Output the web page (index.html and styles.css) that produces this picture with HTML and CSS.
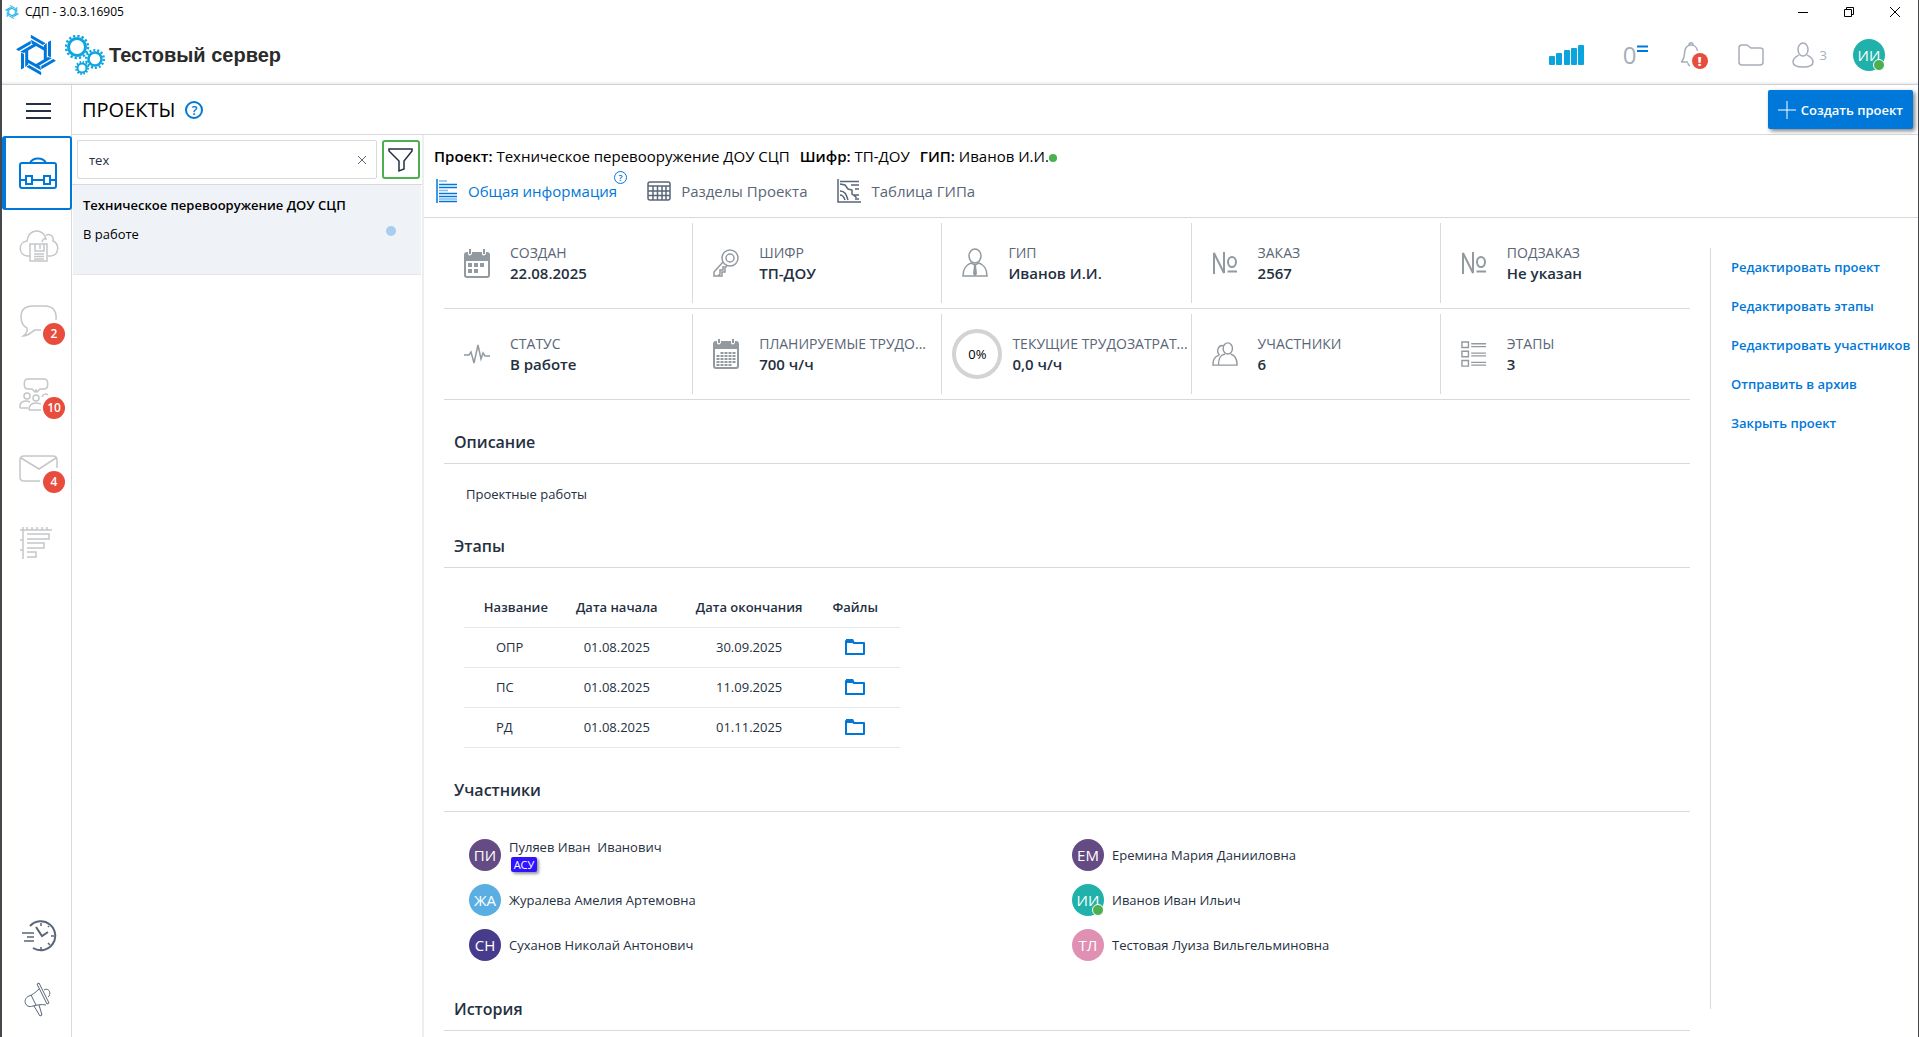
FILE: index.html
```html
<!DOCTYPE html>
<html lang="ru">
<head>
  <meta charset="UTF-8">
  <title>СДП - 3.0.3.16905</title>
  <meta name="viewport" content="width=device-width, initial-scale=1">
  <link rel="stylesheet" href="styles.css">
</head>
<body>
  <svg class="defs" aria-hidden="true">
    <symbol id="logo" viewBox="-20 -20 40 40">
      <g id="blade"><path d="M15-14.500V2.500L12 1V-13zM10.800-12V6.300L7.800 4.600V-9.500z"/></g>
      <use href="#blade" transform="rotate(60)"/>
      <use href="#blade" transform="rotate(120)"/>
      <use href="#blade" transform="rotate(180)"/>
      <use href="#blade" transform="rotate(240)"/>
      <use href="#blade" transform="rotate(300)"/>
    </symbol>
    <symbol id="folder" viewBox="0 0 20 16">
      <path d="M1 14V2h6l2 2h10v11H1z" fill="none" stroke="currentColor" stroke-width="2" stroke-linejoin="round"/>
      <path d="M1 0h7l2 4H1z"/>
    </symbol>
    <symbol id="numero" viewBox="0 0 26 26">
      <path d="M2 24V3L12 23V2" fill="none" stroke="currentColor" stroke-width="2"/>
      <ellipse cx="20" cy="12" rx="4" ry="5" fill="none" stroke="currentColor" stroke-width="2"/>
      <path d="M15.500 21.500h9.500" stroke="currentColor" stroke-width="2"/>
    </symbol>
  </svg>

  <div class="window">
    <div class="titlebar">
      <svg class="title-logo" width="14" height="14"><use href="#logo"/></svg>
      <span>СДП - 3.0.3.16905</span>
      <div class="win-btns">
        <button aria-label="Свернуть"><svg width="12" height="12"><path d="M1 6.500h10"/></svg></button>
        <button aria-label="Развернуть"><svg width="12" height="12"><path d="M1.500 3.500h7v7h-7zM3.500 3.500v-2h7v7h-2"/></svg></button>
        <button aria-label="Закрыть"><svg width="12" height="12"><path d="M1 1l10 10M11 1L1 11"/></svg></button>
      </div>
    </div>

    <header class="header">
      <svg class="logo" width="40" height="40"><use href="#logo"/></svg>
      <svg class="gears" width="40" height="40" viewBox="0 0 40 40" fill="none">
        <circle cx="12" cy="12" r="8.500" stroke-width="3"/>
        <circle cx="12" cy="12" r="11" stroke-width="2.500" stroke-dasharray="2.300 2.020"/>
        <circle cx="30" cy="24" r="6.500" stroke-width="2.500"/>
        <circle cx="30" cy="24" r="8.800" stroke-width="2.500" stroke-dasharray="2 1.950"/>
        <circle cx="17" cy="33" r="4.500" stroke-width="2"/>
        <circle cx="17" cy="33" r="6" stroke-width="2" stroke-dasharray="1.500 1.640"/>
      </svg>
      <span class="server-name">Тестовый сервер</span>
      <div class="header-icons">
        <svg class="signal" width="36" height="22" viewBox="0 0 36 22">
          <rect x="0" y="12" width="6" height="9" rx="1"/><rect x="7" y="9" width="6" height="12" rx="1"/><rect x="15" y="6" width="6" height="15" rx="1"/><rect x="22" y="4" width="6" height="17" rx="1"/><rect x="29" y="1" width="6" height="20" rx="1"/>
        </svg>
        <span class="counter">0<svg width="11" height="8"><path d="M0 1.500h11M0 6h11" stroke-width="2"/></svg></span>
        <button class="icon-btn bell" aria-label="Уведомления">
          <svg width="28" height="28" viewBox="0 0 28 28" class="line">
            <path d="M1 21c4-3 3-7 4-12 1-3 3-5 6-5s6 2 6.500 6M1 21h7M9 4c0-3 4-3 4 0M8 22c0 2 1 2 2 3"/>
          </svg>
          <span class="alert">!</span>
        </button>
        <button class="icon-btn files" aria-label="Файлы">
          <svg width="26" height="22" viewBox="0 0 26 22" class="line"><path d="M1 18V4c0-2 1-3 3-3h5l4 3h9c2 0 3 1 3 2v12c0 2-1 3-3 3H4c-2 0-3-1-3-3z"/></svg>
        </button>
        <button class="icon-btn users">
          <svg width="22" height="26" viewBox="0 0 22 26" class="line"><ellipse cx="11" cy="7.500" rx="5" ry="6.500"/><path d="M7 13c-3 2-6 3-6 7 0 3 4 5 10 5s10-2 10-5c0-4-3-5-6-7"/></svg>
          3
        </button>
        <button class="avatar teal online">ИИ</button>
      </div>
    </header>

    <div class="body">
      <nav class="sidebar">
        <button class="burger" aria-label="Меню"><i></i><i></i><i></i></button>
        <a href="#" class="nav-item active" aria-label="Проекты">
          <svg width="38" height="34" viewBox="0 0 38 34"><path d="M11 7C14 1 24 1 27 7M3 7h32q2 0 2 2v21q0 2-2 2H3q-2 0-2-2V9q0-2 2-2zM1 24h5M14 24h11M32 24h5M7 20h6v8H7zM25 20h6v8h-6z"/></svg>
        </a>
        <a href="#" class="nav-item" aria-label="Облако">
          <svg width="40" height="34" viewBox="0 0 40 34"><path d="M11 26H8c-9-1-9-14 0-15C9-2 25-2 27 9c-2-1-3 0-4 3M27 5c5-2 8 2 7 6 7 3 6 14-2 15h-3M11 14h17v17H11zM16 14v7h9v-7M21 15v4M15 24h10M15 26.500h10M15 29h10"/></svg>
        </a>
        <a href="#" class="nav-item" aria-label="Сообщения">
          <svg width="40" height="34" viewBox="0 0 40 34"><path d="M37 16C38 6 33 2 26 2H14C6 2 2 6 2 13c0 6 2 9 6 11 1 3-1 6-4 8 6 0 8-4 12-6h6"/></svg>
          <span class="badge">2</span>
        </a>
        <a href="#" class="nav-item" aria-label="Обсуждения">
          <svg width="40" height="34" viewBox="0 0 40 34"><path d="M9 1h16c5 0 5 10 0 10h-2l-2 0-3 3-1-2-1 2-3-3H9C4 11 4 1 9 1z"/><circle cx="8" cy="18" r="3"/><circle cx="17" cy="20" r="3"/><path d="M23 19c1-3 4-4 6-2M1 30v-3c1-4 6-5 10-3M1 30h8M10 32c0-5 2-7 7-7 2 0 4 1 5 1M10 32h12"/></svg>
          <span class="badge">10</span>
        </a>
        <a href="#" class="nav-item" aria-label="Почта">
          <svg width="40" height="34" viewBox="0 0 40 34"><path d="M38 16V8q0-4-4-4H5Q1 4 1 8v17q0 4 4 4h16M2 6l18 11L37 6"/></svg>
          <span class="badge">4</span>
        </a>
        <a href="#" class="nav-item" aria-label="График">
          <svg width="40" height="34" viewBox="0 0 40 34"><path d="M1 4h32M4 1v32M1 14h3M1 24h3M8 1v3M13 1v3M18 1v3M23 1v3M28 1v3M8 8h22v5H8M8 17h17v5H8M8 26h9v5H8"/></svg>
        </a>
        <div class="nav-bottom">
          <a href="#" class="nav-item dark" aria-label="История">
            <svg width="36" height="32" viewBox="0 0 36 32"><path d="M9 6a14.500 14.500 0 1 1 3 22" stroke-width="2"/><path d="M15 7l6 9 6-4" stroke-width="2"/><path d="M1 13h12M6 17h7M3 21h10M20 3v3M20 27v3M30 16h3M27 7l1-1M27 23l2 2"/></svg>
          </a>
          <a href="#" class="nav-item dark" aria-label="Объявления">
            <svg width="30" height="36" viewBox="0 0 30 36"><path d="M15 7C11 11 8 13 5 14c-7 3-4 13 4 10 4-1 8-2 13-1M7 13l5 10M13 2l10 20 2-1L15 1zM20 8c5-3 8 4 4 7M10 24l6 10 2-1-3-10" stroke-width="1"/></svg>
          </a>
        </div>
      </nav>

      <div class="page">
        <div class="page-head">
          <h1>ПРОЕКТЫ</h1>
          <button class="help" aria-label="Справка">?</button>
          <button class="create-btn">
            <svg width="18" height="18"><path d="M9 0v18M0 9h18"/></svg>
            Создать проект
          </button>
        </div>

        <div class="columns">
          <section class="list">
            <div class="search-row">
              <div class="search">
                <input type="text" value="тех" aria-label="Поиск">
                <button aria-label="Очистить"><svg width="10" height="10"><path d="M1 1l8 8M9 1L1 9"/></svg></button>
              </div>
              <button class="filter-btn" aria-label="Фильтр">
                <svg width="26" height="26" viewBox="0 0 26 26"><path d="M1 2h23v2l-8 10v8l-5 2V14L1 4z"/></svg>
              </button>
            </div>
            <a href="#" class="project">
              <b>Техническое перевооружение ДОУ СЦП</b>
              <span class="project-status">В работе <i></i></span>
            </a>
          </section>

          <main class="content">
            <div class="content-head">
              <div class="project-line">
                <span><b>Проект:</b> Техническое перевооружение ДОУ СЦП</span>
                <span><b>Шифр:</b> ТП-ДОУ</span>
                <span><b>ГИП:</b> Иванов И.И.<i class="dot"></i></span>
              </div>
              <div class="tabs">
                <a href="#" class="tab active">
                  <svg width="22" height="24" viewBox="0 0 22 24"><path d="M1 0v24M3 5.500h18M3 8.500h18M3 14.500h18M3 17.500h18M3 22.500h18"/><path d="M3 2h8M3 11.500h9M3 20h18" opacity=".5"/></svg>
                  <span class="tab-text">Общая информация<span class="help small">?</span></span>
                </a>
                <a href="#" class="tab">
                  <svg width="24" height="20" viewBox="0 0 24 20"><path d="M1 5V3q0-2 2-2h18q2 0 2 2v14q0 2-2 2H3q-2 0-2-2V5h22M1 10h22M1 14.500h22M6 5v14M10.500 5v14M15 5v14M19 5v14"/></svg>
                  <span class="tab-text">Разделы Проекта</span>
                </a>
                <a href="#" class="tab">
                  <svg width="24" height="24" viewBox="0 0 24 24"><path d="M1 0v23h23M3 2.500h19M14 6h8M18 10h4M17 16h5M20 20h2M3 5l5 1 3 4 4 1 0 4 4 3v3M3 12c5 0 6 3 8 9M3 16c3 0 4 2 5 5"/></svg>
                  <span class="tab-text">Таблица ГИПа</span>
                </a>
              </div>
            </div>

            <div class="content-body">
              <div class="details">
                <div class="cards">
                  <div class="card">
                    <svg width="26" height="30" viewBox="0 0 26 30"><path d="M1 12h24v15q0 2-2 2H3q-2 0-2-2V8" fill="none" stroke="currentColor" stroke-width="2"/><path d="M0 12V7q0-3 3-3h1v2q1 3 4 0V4h10v2q1 3 4 0V4h1q3 0 3 3v5zM5 1v5h2V1zM19 1v5h2V1zM4 15h4v4H4zM10 15h4v4h-4zM16 15h4v4h-4zM4 21h4v4H4zM10 21h4v4h-4z"/></svg>
                    <div><span>СОЗДАН</span><b>22.08.2025</b></div>
                  </div>
                  <div class="card">
                    <svg class="stroke" width="26" height="30" viewBox="0 0 26 30"><circle cx="17" cy="10" r="8"/><circle cx="17" cy="10" r="4"/><path d="M10 14L1 24v4h4l2-2v-4h3v-3h3l1-2M5 28h4v-4h3v-4"/></svg>
                    <div><span>ШИФР</span><b>ТП-ДОУ</b></div>
                  </div>
                  <div class="card">
                    <svg class="stroke" width="26" height="30" viewBox="0 0 26 30"><ellipse cx="13" cy="8" rx="6" ry="7"/><path d="M9 15c-5 2-8 5-8 13h24c0-8-3-11-8-13l-4 2z"/><path d="M12 17h2l1 9-2 2-2-2z" fill="currentColor" stroke="none"/></svg>
                    <div><span>ГИП</span><b>Иванов И.И.</b></div>
                  </div>
                  <div class="card">
                    <svg width="28" height="28"><use href="#numero"/></svg>
                    <div><span>ЗАКАЗ</span><b>2567</b></div>
                  </div>
                  <div class="card">
                    <svg width="28" height="28"><use href="#numero"/></svg>
                    <div><span>ПОДЗАКАЗ</span><b>Не указан</b></div>
                  </div>
                  <div class="card">
                    <svg class="stroke" width="26" height="24" viewBox="0 0 26 24"><path d="M0 13h5l2-3 3 11 4-18 3 14 2-6 2 3h5"/></svg>
                    <div><span>СТАТУС</span><b>В работе</b></div>
                  </div>
                  <div class="card">
                    <svg width="26" height="30" viewBox="0 0 26 30"><path d="M1 9h24v18q0 2-2 2H3q-2 0-2-2V8" fill="none" stroke="currentColor" stroke-width="2"/><path d="M0 9V5q0-3 3-3h1v2q1 3 4 0V2h10v2q1 3 4 0V2h1q3 0 3 3v4zM5 0v4h2V0zM19 0v4h2V0z"/><path d="M5 16v11M9 13v14M13 13v14M17 13v14M21 13v11" stroke="currentColor" stroke-width="3" stroke-dasharray="2 1"/></svg>
                    <div><span>ПЛАНИРУЕМЫЕ ТРУДО...</span><b>700 ч/ч</b></div>
                  </div>
                  <div class="card progress">
                    <div class="ring">0%</div>
                    <div><span>ТЕКУЩИЕ ТРУДОЗАТРАТ...</span><b>0,0 ч/ч</b></div>
                  </div>
                  <div class="card">
                    <svg class="stroke" width="28" height="26" viewBox="0 0 28 26"><ellipse cx="17" cy="7" rx="5" ry="6"/><path d="M14 13c-5 1-7 4-7 12h20c0-8-3-11-7-12M12 4c-5-1-8 6-4 10M8 14c-5 2-7 4-7 11h6"/></svg>
                    <div><span>УЧАСТНИКИ</span><b>6</b></div>
                  </div>
                  <div class="card">
                    <svg class="stroke" width="28" height="28" viewBox="0 0 28 28"><path d="M1 1h7v6H1zM1 11h7v6H1zM1 21h7v6H1zM11 3h16M11 6h16M11 13h16M11 16h16M11 23h16M11 26h16"/></svg>
                    <div><span>ЭТАПЫ</span><b>3</b></div>
                  </div>
                </div>

                <h2>Описание</h2>
                <p class="description">Проектные работы</p>

                <h2>Этапы</h2>
                <table class="stages">
                  <thead>
                    <tr><th>Название</th><th>Дата начала</th><th>Дата окончания</th><th>Файлы</th></tr>
                  </thead>
                  <tbody>
                    <tr><td>ОПР</td><td>01.08.2025</td><td>30.09.2025</td><td><a href="#" aria-label="Файлы ОПР"><svg width="20" height="16"><use href="#folder"/></svg></a></td></tr>
                    <tr><td>ПС</td><td>01.08.2025</td><td>11.09.2025</td><td><a href="#" aria-label="Файлы ПС"><svg width="20" height="16"><use href="#folder"/></svg></a></td></tr>
                    <tr><td>РД</td><td>01.08.2025</td><td>01.11.2025</td><td><a href="#" aria-label="Файлы РД"><svg width="20" height="16"><use href="#folder"/></svg></a></td></tr>
                  </tbody>
                </table>

                <h2>Участники</h2>
                <div class="people">
                  <div class="person"><span class="avatar violet">ПИ</span><div>Пуляев Иван&nbsp; Иванович<span class="tag">АСУ</span></div></div>
                  <div class="person"><span class="avatar violet">ЕМ</span>Еремина Мария Данииловна</div>
                  <div class="person"><span class="avatar sky">ЖА</span>Журалева Амелия Артемовна</div>
                  <div class="person"><span class="avatar teal online">ИИ</span>Иванов Иван Ильич</div>
                  <div class="person"><span class="avatar indigo">СН</span>Суханов Николай Антонович</div>
                  <div class="person"><span class="avatar pink">ТЛ</span>Тестовая Луиза Вильгельминовна</div>
                </div>

                <h2>История</h2>
              </div>

              <aside class="actions">
                <a href="#">Редактировать проект</a>
                <a href="#">Редактировать этапы</a>
                <a href="#">Редактировать участников</a>
                <a href="#">Отправить в архив</a>
                <a href="#">Закрыть проект</a>
              </aside>
            </div>
          </main>
        </div>
      </div>
    </div>
  </div>
</body>
</html>
```

FILE: styles.css
```css
:root {
  --blue: #0078d9;
  --text: #25303f;
  --muted: #5a6577;
  --icon: #92999f;
  --line: #d9d9d9;
  --red: #e74c3c;
  --green: #4caf50;
}
* {
  box-sizing: border-box;
}
body {
  margin: 0;
  background: #fff;
  color: var(--text);
  font-family: "Open Sans", "Noto Sans", sans-serif;
  font-size: 13px;
  line-height: 20px;
}
a {
  text-decoration: none;
  color: inherit;
}
button {
  font: inherit;
  color: inherit;
  background: none;
  border: none;
  padding: 0;
  cursor: pointer;
}
b {
  font-weight: 600;
}
svg {
  display: block;
  flex: none;
  fill: currentColor;
}
.defs {
  position: absolute;
  width: 0;
  height: 0;
}
.window {
  min-height: 100vh;
  display: flex;
  flex-direction: column;
  border-left: 2px solid #45484c;
  border-right: 1px solid #45484c;
}

/* title bar */
.titlebar {
  height: 24px;
  display: flex;
  align-items: center;
  gap: 6px;
  padding-left: 3px;
  font-size: 12px;
  color: #000;
}
.title-logo {
  color: #1cb0e6;
}
.win-btns {
  margin-left: auto;
  display: flex;
}
.win-btns button {
  width: 46px;
  height: 24px;
  display: flex;
  align-items: center;
  justify-content: center;
}
.win-btns svg {
  fill: none;
  stroke: #000;
}

/* header */
.header {
  height: 61px;
  display: flex;
  align-items: center;
  padding: 1px 33px 0 14px;
  border-bottom: 1px solid #d0d0d0;
  box-shadow: 0 -2px 3px -1px rgba(0, 0, 0, 0.1) inset;
}
.logo {
  color: var(--blue);
}
.gears {
  margin-left: 9px;
  stroke: #0ea5e0;
  fill: none;
}
.server-name {
  margin-left: 4px;
  font: bold 20px/24px "Liberation Sans", Arial, sans-serif;
  color: #2b2b2b;
}
.header-icons {
  margin-left: auto;
  display: flex;
  align-items: center;
  gap: 30px;
}
.signal {
  color: #0aa5dd;
  margin-right: 8px;
}
.counter {
  display: flex;
  margin-right: 2px;
  font-size: 24px;
  color: #a6adba;
}
.counter svg {
  stroke: var(--blue);
}
.line {
  fill: none;
  stroke: #a6adba;
  stroke-width: 1.5;
}
.bell {
  position: relative;
}
.alert {
  position: absolute;
  right: 0;
  bottom: 0;
  width: 16px;
  height: 16px;
  border-radius: 50%;
  background: var(--red);
  color: #fff;
  font-weight: 800;
  line-height: 16px;
}
.files {
  margin-right: -2px;
}
.users {
  display: flex;
  align-items: center;
  gap: 6px;
  margin-right: -4px;
  color: #a6adba;
}
.avatar {
  position: relative;
  width: 32px;
  height: 32px;
  flex: none;
  display: flex;
  align-items: center;
  justify-content: center;
  border-radius: 50%;
  color: #fff;
  font-size: 15px;
}
.teal { background: #20b2aa; }
.violet { background: #654b83; }
.sky { background: #5aaee2; }
.indigo { background: #473c8b; }
.pink { background: #e091b3; }
.online::after {
  content: "";
  position: absolute;
  right: 0;
  bottom: 0;
  width: 10px;
  height: 10px;
  border-radius: 50%;
  border: 1px solid #fff;
  background: var(--green);
}

/* left navigation */
.body {
  flex: 1;
  display: flex;
}
.sidebar {
  width: 70px;
  flex: none;
  display: flex;
  flex-direction: column;
  border-right: 1px solid var(--line);
}
.burger {
  height: 51px;
  display: flex;
  flex-direction: column;
  align-items: center;
  justify-content: center;
  gap: 5px;
  padding-left: 4px;
}
.burger i {
  width: 25px;
  height: 2px;
  background: #253045;
}
.nav-item {
  position: relative;
  height: 74px;
  display: flex;
  align-items: center;
  justify-content: center;
  padding-left: 4px;
  color: #c4c6c8;
}
.nav-item svg {
  fill: none;
  stroke: currentColor;
  stroke-width: 1.5;
}
.nav-item.active {
  margin-right: -1px;
  padding-left: 0;
  color: var(--blue);
  border: 2px solid var(--blue);
  border-left-width: 4px;
  border-radius: 3px;
}
.nav-item.active svg {
  stroke-width: 2;
}
.nav-item.dark {
  height: 64px;
  color: #5a6577;
}
.nav-bottom {
  margin-top: auto;
  padding-bottom: 5px;
}
.badge {
  position: absolute;
  right: 6px;
  bottom: 13px;
  width: 22px;
  height: 22px;
  border-radius: 50%;
  background: var(--red);
  color: #fff;
  font-size: 12px;
  font-weight: 600;
  line-height: 22px;
  text-align: center;
}

/* page title */
.page {
  flex: 1;
  min-width: 0;
  display: flex;
  flex-direction: column;
}
.page-head {
  height: 50px;
  display: flex;
  align-items: center;
  padding: 0 5px 0 10px;
  border-bottom: 1px solid var(--line);
}
h1 {
  margin: 0 10px 0 0;
  font-size: 20px;
  font-weight: 400;
  color: #000;
}
.help {
  width: 18px;
  height: 18px;
  border: 2px solid var(--blue);
  border-radius: 50%;
  color: var(--blue);
  font-size: 13px;
  font-weight: 600;
  line-height: 14px;
  text-align: center;
}
.help.small {
  position: absolute;
  right: -10px;
  top: -10px;
  width: 13px;
  height: 13px;
  border-width: 1px;
  font-size: 9px;
  line-height: 11px;
}
.create-btn {
  margin-left: auto;
  height: 39px;
  display: flex;
  align-items: center;
  gap: 5px;
  padding: 0 10px;
  border-radius: 2px;
  background: var(--blue);
  box-shadow: 2px 2px 4px rgba(0, 0, 0, 0.5);
  color: #fff;
  font-weight: 600;
}
.create-btn svg {
  stroke: #fff;
}
.columns {
  flex: 1;
  display: flex;
}

/* project list */
.list {
  width: 352px;
  flex: none;
  border-right: 2px solid #eeeef1;
}
.search-row {
  display: flex;
  gap: 5px;
  padding: 5px 2px 5px 5px;
  border-bottom: 1px solid var(--line);
}
.search {
  flex: 1;
  height: 39px;
  display: flex;
  align-items: center;
  padding: 0 9px 0 10px;
  border: 1px solid var(--line);
  border-radius: 2px;
}
.search input {
  flex: 1;
  min-width: 0;
  border: none;
  outline: none;
  padding: 0 1px;
  font: inherit;
  color: inherit;
}
.search svg {
  stroke: #5a6577;
}
.filter-btn {
  width: 38px;
  display: flex;
  align-items: center;
  justify-content: center;
  border: 2px solid var(--green);
  border-radius: 3px;
}
.filter-btn svg {
  fill: none;
  stroke: #253045;
  stroke-width: 1.5;
}
.project {
  height: 90px;
  display: flex;
  flex-direction: column;
  gap: 9px;
  padding: 10px 25px 0 10px;
  margin: 0 1px;
  background: #eff3f8;
  border-bottom: 1px solid #e4e6e9;
  color: #000;
}
.project-status {
  display: flex;
  justify-content: space-between;
}
.project-status i {
  width: 10px;
  height: 10px;
  margin-top: 2px;
  border-radius: 50%;
  background: #a8cdee;
}

/* project content */
.content {
  flex: 1;
  min-width: 0;
  display: flex;
  flex-direction: column;
}
.content-head {
  height: 83px;
  padding: 11px 10px 0;
  border-bottom: 1px solid var(--line);
}
.project-line {
  display: flex;
  gap: 10px;
  font-size: 15px;
  color: #000;
}
.dot {
  display: inline-block;
  width: 8px;
  height: 8px;
  border-radius: 50%;
  background: var(--green);
}
.tabs {
  display: flex;
  gap: 30px;
  padding: 13px 2px 0;
}
.tab {
  height: 24px;
  display: flex;
  align-items: center;
  gap: 10px;
  font-size: 15px;
  color: var(--muted);
}
.tab-text {
  position: relative;
}
.tab.active {
  color: var(--blue);
}
.tab svg {
  fill: none;
  stroke: currentColor;
  stroke-width: 1.5;
}
.content-body {
  flex: 1;
  display: flex;
}
.details {
  flex: 1;
  min-width: 0;
  padding: 0 20px;
}
.cards {
  display: grid;
  grid-template-columns: repeat(5, minmax(0, 1fr));
}
.card {
  height: 91px;
  display: flex;
  align-items: center;
  padding: 0 0 0 20px;
  border-bottom: 1px solid var(--line);
  color: var(--icon);
  background: linear-gradient(var(--line), var(--line)) right 5px / 1px 80px no-repeat;
}
.card:nth-child(5n) {
  background: none;
}
.card svg {
  width: 26px;
  margin-right: 20px;
}
.card svg.stroke {
  fill: none;
  stroke: currentColor;
  stroke-width: 1.5;
}
.card span,
.card b {
  display: block;
  white-space: nowrap;
}
.card span {
  font-size: 14px;
  color: var(--muted);
}
.card b {
  font-size: 15px;
  color: var(--text);
}
.card.progress {
  padding-left: 10px;
}
.card .ring {
  width: 50px;
  height: 50px;
  flex: none;
  margin-right: 10px;
  border: 4px solid #d3d3d3;
  border-radius: 50%;
  line-height: 42px;
  text-align: center;
  color: #000;
}
h2 {
  margin: 0;
  padding: 30px 10px 9px;
  border-bottom: 1px solid var(--line);
  font-size: 16px;
  font-weight: 600;
  line-height: 24px;
}
.description {
  margin: 0;
  padding: 20px 22px 0;
}
.stages {
  width: 436px;
  margin: 20px 20px 0;
  border-collapse: collapse;
}
.stages th,
.stages td {
  height: 40px;
  padding: 0;
  border-bottom: 1px solid #e8e8e8;
  text-align: center;
}
.stages th {
  font-weight: 600;
  height: 39px;
}
.stages th:nth-child(1) { width: 106px; }
.stages th:nth-child(2) { width: 100px; }
.stages th:nth-child(3) { width: 172px; }
.stages td:first-child {
  padding-left: 32px;
  text-align: left;
}
.stages th:last-child,
.stages td:last-child {
  padding-right: 22px;
}
.stages td svg {
  margin: 0 auto;
  color: var(--blue);
}
.people {
  display: grid;
  grid-template-columns: 1fr 1fr;
  row-gap: 5px;
  padding: 23px 15px 2px 25px;
}
.person {
  height: 40px;
  display: flex;
  align-items: center;
  gap: 8px;
}
.tag {
  width: 26px;
  display: block;
  margin-left: 2px;
  border-radius: 2px;
  background: #2f14ff;
  box-shadow: 2px 2px 3px rgba(0, 0, 0, 0.4);
  color: #fff;
  font-size: 11px;
  line-height: 15px;
  text-align: center;
}

/* actions */
.actions {
  width: 208px;
  flex: none;
  display: flex;
  flex-direction: column;
  gap: 19px;
  margin: 30px 0 28px;
  padding: 9px 0 0 20px;
  border-left: 1px solid var(--line);
  font-weight: 600;
  color: var(--blue);
}
```
